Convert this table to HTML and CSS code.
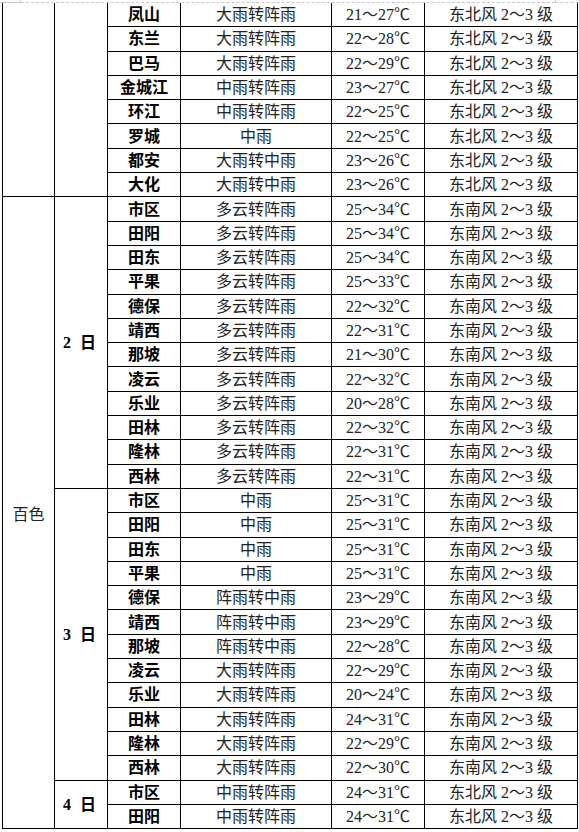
FILE: index.html
```html
<!DOCTYPE html>
<html lang="zh-CN">
<head>
<meta charset="utf-8">
<title>天气预报</title>
<link rel="stylesheet" href="styles.css">
</head>
<body>
<div class="page-edge">
  <div class="edge-left"></div>
  <div class="edge-mid"></div>
  <div class="edge-right"></div>
</div>
<div class="table">
  <div class="c region span8"></div>
  <div class="c day span8"></div>
  <div class="c name">凤山</div><div class="c">大雨转阵雨</div><div class="c num">21～27℃</div><div class="c num">东北风 2～3 级</div>
  <div class="c name">东兰</div><div class="c">大雨转阵雨</div><div class="c num">22～28℃</div><div class="c num">东北风 2～3 级</div>
  <div class="c name">巴马</div><div class="c">大雨转阵雨</div><div class="c num">22～29℃</div><div class="c num">东北风 2～3 级</div>
  <div class="c name">金城江</div><div class="c">中雨转阵雨</div><div class="c num">23～27℃</div><div class="c num">东北风 2～3 级</div>
  <div class="c name">环江</div><div class="c">中雨转阵雨</div><div class="c num">22～25℃</div><div class="c num">东北风 2～3 级</div>
  <div class="c name">罗城</div><div class="c">中雨</div><div class="c num">22～25℃</div><div class="c num">东北风 2～3 级</div>
  <div class="c name">都安</div><div class="c">大雨转中雨</div><div class="c num">23～26℃</div><div class="c num">东北风 2～3 级</div>
  <div class="c name">大化</div><div class="c">大雨转中雨</div><div class="c num">23～26℃</div><div class="c num">东北风 2～3 级</div>

  <div class="c region span26">百色</div>
  <div class="c day span12"><span class="dnum">2</span>日</div>
  <div class="c name">市区</div><div class="c">多云转阵雨</div><div class="c num">25～34℃</div><div class="c num">东南风 2～3 级</div>
  <div class="c name">田阳</div><div class="c">多云转阵雨</div><div class="c num">25～34℃</div><div class="c num">东南风 2～3 级</div>
  <div class="c name">田东</div><div class="c">多云转阵雨</div><div class="c num">25～34℃</div><div class="c num">东南风 2～3 级</div>
  <div class="c name">平果</div><div class="c">多云转阵雨</div><div class="c num">25～33℃</div><div class="c num">东南风 2～3 级</div>
  <div class="c name">德保</div><div class="c">多云转阵雨</div><div class="c num">22～32℃</div><div class="c num">东南风 2～3 级</div>
  <div class="c name">靖西</div><div class="c">多云转阵雨</div><div class="c num">22～31℃</div><div class="c num">东南风 2～3 级</div>
  <div class="c name">那坡</div><div class="c">多云转阵雨</div><div class="c num">21～30℃</div><div class="c num">东南风 2～3 级</div>
  <div class="c name">凌云</div><div class="c">多云转阵雨</div><div class="c num">22～32℃</div><div class="c num">东南风 2～3 级</div>
  <div class="c name">乐业</div><div class="c">多云转阵雨</div><div class="c num">20～28℃</div><div class="c num">东南风 2～3 级</div>
  <div class="c name">田林</div><div class="c">多云转阵雨</div><div class="c num">22～32℃</div><div class="c num">东南风 2～3 级</div>
  <div class="c name">隆林</div><div class="c">多云转阵雨</div><div class="c num">22～31℃</div><div class="c num">东南风 2～3 级</div>
  <div class="c name">西林</div><div class="c">多云转阵雨</div><div class="c num">22～31℃</div><div class="c num">东南风 2～3 级</div>

  <div class="c day span12"><span class="dnum">3</span>日</div>
  <div class="c name">市区</div><div class="c">中雨</div><div class="c num">25～31℃</div><div class="c num">东南风 2～3 级</div>
  <div class="c name">田阳</div><div class="c">中雨</div><div class="c num">25～31℃</div><div class="c num">东南风 2～3 级</div>
  <div class="c name">田东</div><div class="c">中雨</div><div class="c num">25～31℃</div><div class="c num">东南风 2～3 级</div>
  <div class="c name">平果</div><div class="c">中雨</div><div class="c num">25～31℃</div><div class="c num">东南风 2～3 级</div>
  <div class="c name">德保</div><div class="c">阵雨转中雨</div><div class="c num">23～29℃</div><div class="c num">东南风 2～3 级</div>
  <div class="c name">靖西</div><div class="c">阵雨转中雨</div><div class="c num">23～29℃</div><div class="c num">东南风 2～3 级</div>
  <div class="c name">那坡</div><div class="c">阵雨转中雨</div><div class="c num">22～28℃</div><div class="c num">东南风 2～3 级</div>
  <div class="c name">凌云</div><div class="c">大雨转阵雨</div><div class="c num">22～29℃</div><div class="c num">东南风 2～3 级</div>
  <div class="c name">乐业</div><div class="c">大雨转阵雨</div><div class="c num">20～24℃</div><div class="c num">东南风 2～3 级</div>
  <div class="c name">田林</div><div class="c">大雨转阵雨</div><div class="c num">24～31℃</div><div class="c num">东南风 2～3 级</div>
  <div class="c name">隆林</div><div class="c">大雨转阵雨</div><div class="c num">22～29℃</div><div class="c num">东南风 2～3 级</div>
  <div class="c name">西林</div><div class="c">大雨转阵雨</div><div class="c num">22～30℃</div><div class="c num">东南风 2～3 级</div>

  <div class="c day span2"><span class="dnum">4</span>日</div>
  <div class="c name">市区</div><div class="c">中雨转阵雨</div><div class="c num">24～31℃</div><div class="c num">东北风 2～3 级</div>
  <div class="c name">田阳</div><div class="c">中雨转阵雨</div><div class="c num">24～31℃</div><div class="c num">东北风 2～3 级</div>
</div>
</body>
</html>
```

FILE: styles.css
```css
html, body {
  margin: 0;
  padding: 0;
  background: #ffffff;
}

body {
  font-family: "Liberation Serif", "Noto Sans CJK SC", serif;
  font-size: 16px;
  color: #222222;
}

.page-edge {
  display: flex;
  height: 3px;
}

.edge-left {
  width: 20px;
  height: 2px;
  border-bottom: 1px solid #c8c8c8;
  border-right: 1px solid #c8c8c8;
}

.edge-mid {
  width: 534px;
  height: 2px;
  border-bottom: 1px dashed #c8c8c8;
}

.edge-right {
  flex: 1;
  height: 2px;
  border-left: 1px solid #c8c8c8;
  border-bottom: 1px dashed #c8c8c8;
}

.table {
  display: grid;
  margin-left: 2px;
  width: 576px;
  border-left: 1px solid #000;
  grid-template-columns: 52px 53px 73px 151px 93px 153px;
  grid-template-rows: repeat(34, 24.3px);
}

.c {
  box-sizing: border-box;
  border-right: 1px solid #000;
  border-bottom: 1px solid #000;
  display: flex;
  align-items: center;
  justify-content: center;
  white-space: nowrap;
  line-height: 1;
  padding-top: 1px;
}

.region {
  grid-column: 1;
  padding-top: 4px;
}

.day {
  grid-column: 2;
  font-weight: bold;
  color: #000;
  padding-right: 3px;
}

.dnum {
  margin-right: 9px;
}

.name {
  font-weight: bold;
  color: #000;
}

.span2 { grid-row: span 2; }
.span8 { grid-row: span 8; }
.span12 { grid-row: span 12; }
.span26 { grid-row: span 26; }
```
